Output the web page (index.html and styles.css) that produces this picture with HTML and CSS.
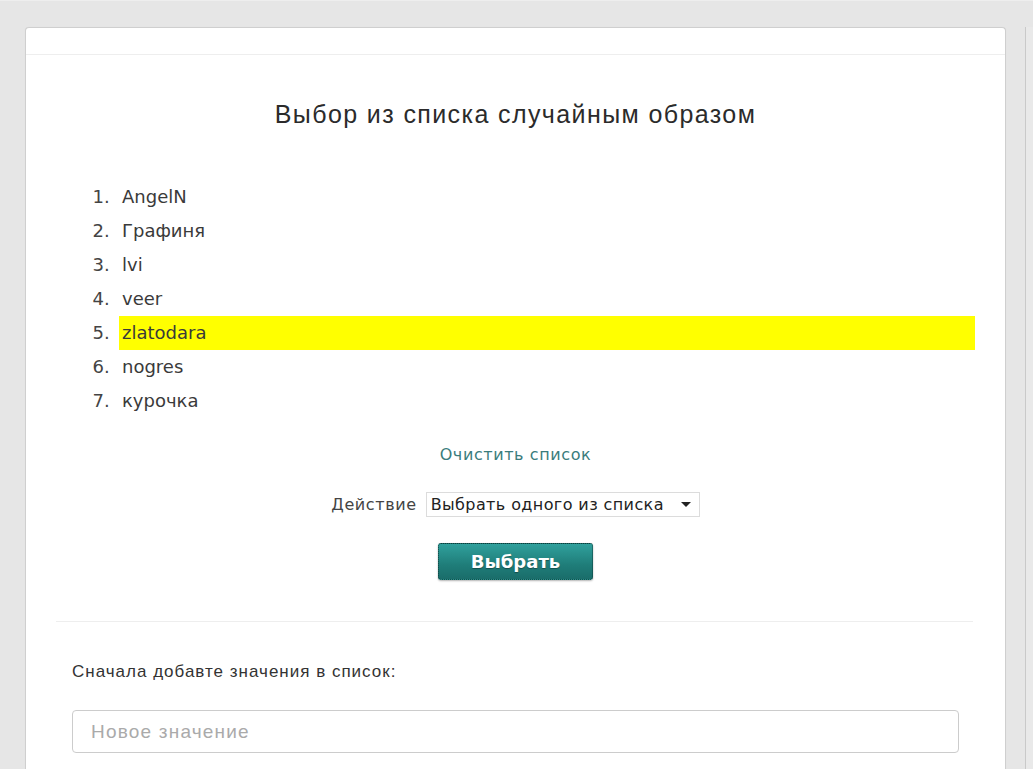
FILE: index.html
```html
<!DOCTYPE html>
<html lang="ru">
<head>
<meta charset="utf-8">
<title>Выбор из списка случайным образом</title>
<link rel="stylesheet" href="styles.css">
</head>
<body>
<div class="page">
  <div class="card">
    <div class="card-head"></div>
    <div class="card-body">
      <h1 class="title">Выбор из списка случайным образом</h1>
      <ol class="items">
        <li class="item">AngelN</li>
        <li class="item">Графиня</li>
        <li class="item">lvi</li>
        <li class="item">veer</li>
        <li class="item item-picked">zlatodara</li>
        <li class="item">nogres</li>
        <li class="item">курочка</li>
      </ol>
      <div class="clear-row"><a class="clear-link" href="#">Очистить список</a></div>
      <div class="action-row">
        <span class="action-label">Действие</span>
        <div class="select-box">
          <span class="select-text">Выбрать одного из списка</span>
          <span class="select-arrow"></span>
        </div>
      </div>
      <div class="button-row"><button class="pick-button" type="button">Выбрать</button></div>
      <div class="divider"></div>
      <div class="add-section">
        <div class="add-label">Сначала добавте значения в список:</div>
        <div class="add-input"><span class="placeholder">Новое значение</span></div>
      </div>
    </div>
  </div>
  <div class="side-card"></div>
</div>
</body>
</html>
```
FILE: styles.css
```css
html, body {
  margin: 0;
  padding: 0;
  height: 100%;
  overflow: hidden;
}
body {
  background: #e6e6e6;
  font-family: "DejaVu Sans", Verdana, sans-serif;
  color: #333;
}
.page {
  display: flex;
  align-items: flex-start;
  padding: 26px 0 0 25px;
  border-top: 1px solid #eeeeee;
  box-sizing: border-box;
  height: 100%;
}
.card {
  width: 981px;
  flex: none;
  background: #fff;
  border: 1px solid #cfcfcf;
  border-bottom: none;
  border-radius: 4px 4px 0 0;
  box-sizing: border-box;
  height: 760px;
  box-shadow: 0 0 1px rgba(0,0,0,0.05);
}
.card-head {
  height: 26px;
  border-bottom: 1px solid #eeeeee;
}
.card-body {
  padding: 0 30px;
}
.title {
  margin: 44px 0 0;
  font-family: "Liberation Sans", Arial, sans-serif;
  font-weight: normal;
  font-size: 25px;
  letter-spacing: 1.4px;
  line-height: 30px;
  text-align: center;
  color: #2b2b2b;
}
.items {
  margin: 51px 0 0 63px;
  padding: 0;
  list-style: decimal;
  font-size: 18px;
  color: #3a3a3a;
}
.item {
  height: 34px;
  line-height: 34px;
  padding-left: 3px;
}
.item::marker {
  content: counter(list-item) ".\00a0\2009";
  color: #444;
}
.item-picked {
  background: #ffff00;
}
.clear-row {
  margin-top: 27px;
  text-align: center;
  line-height: 20px;
}
.clear-link {
  font-size: 16px;
  letter-spacing: 0.6px;
  color: #3a7c7c;
  text-decoration: none;
}
.action-row {
  margin-top: 27px;
  display: flex;
  justify-content: center;
  align-items: center;
  gap: 9px;
  height: 25px;
}
.action-label {
  font-size: 16px;
  letter-spacing: 0.6px;
  color: #444;
}
.select-box {
  width: 274px;
  height: 25px;
  box-sizing: border-box;
  border: 1px solid #dcdcdc;
  background: #fff;
  display: flex;
  align-items: center;
  padding: 0 8px 0 4px;
}
.select-text {
  flex: 1;
  font-size: 16px;
  letter-spacing: 0.4px;
  color: #222;
  white-space: nowrap;
}
.select-arrow {
  width: 0;
  height: 0;
  border-left: 5px solid transparent;
  border-right: 5px solid transparent;
  border-top: 5px solid #222;
}
.button-row {
  margin-top: 26px;
  display: flex;
  justify-content: center;
}
.pick-button {
  width: 155px;
  height: 37px;
  border: 1px dotted #0d3f3d;
  border-radius: 3px;
  background: linear-gradient(#30a09c, #1f7d79 60%, #1a6d6a);
  color: #fff;
  font-family: "DejaVu Sans", Verdana, sans-serif;
  font-weight: bold;
  font-size: 18px;
  text-shadow: 0 1px 1px rgba(0,0,0,0.35);
  box-shadow: 0 1px 2px rgba(0,0,0,0.3);
  padding: 0;
}
.divider {
  margin-top: 41px;
  height: 1px;
  background: #eeeeee;
  margin-right: 2px;
}
.add-section {
  padding: 0 16px;
}
.add-label {
  margin-top: 40px;
  line-height: 20px;
  font-family: "Liberation Sans", Arial, sans-serif;
  font-size: 17px;
  letter-spacing: 1px;
  color: #333;
}
.add-input {
  margin-top: 28px;
  height: 43px;
  box-sizing: border-box;
  border: 1px solid #cccccc;
  border-radius: 4px;
  display: flex;
  align-items: center;
  padding-left: 18px;
}
.placeholder {
  font-family: "Liberation Sans", Arial, sans-serif;
  font-size: 19px;
  letter-spacing: 1.2px;
  color: #aaaaaa;
}
.side-card {
  margin-left: 19px;
  flex: 1;
  height: 760px;
  border-left: 1px solid #c9c9c9;
  background: #e9e9e9;
}
```
